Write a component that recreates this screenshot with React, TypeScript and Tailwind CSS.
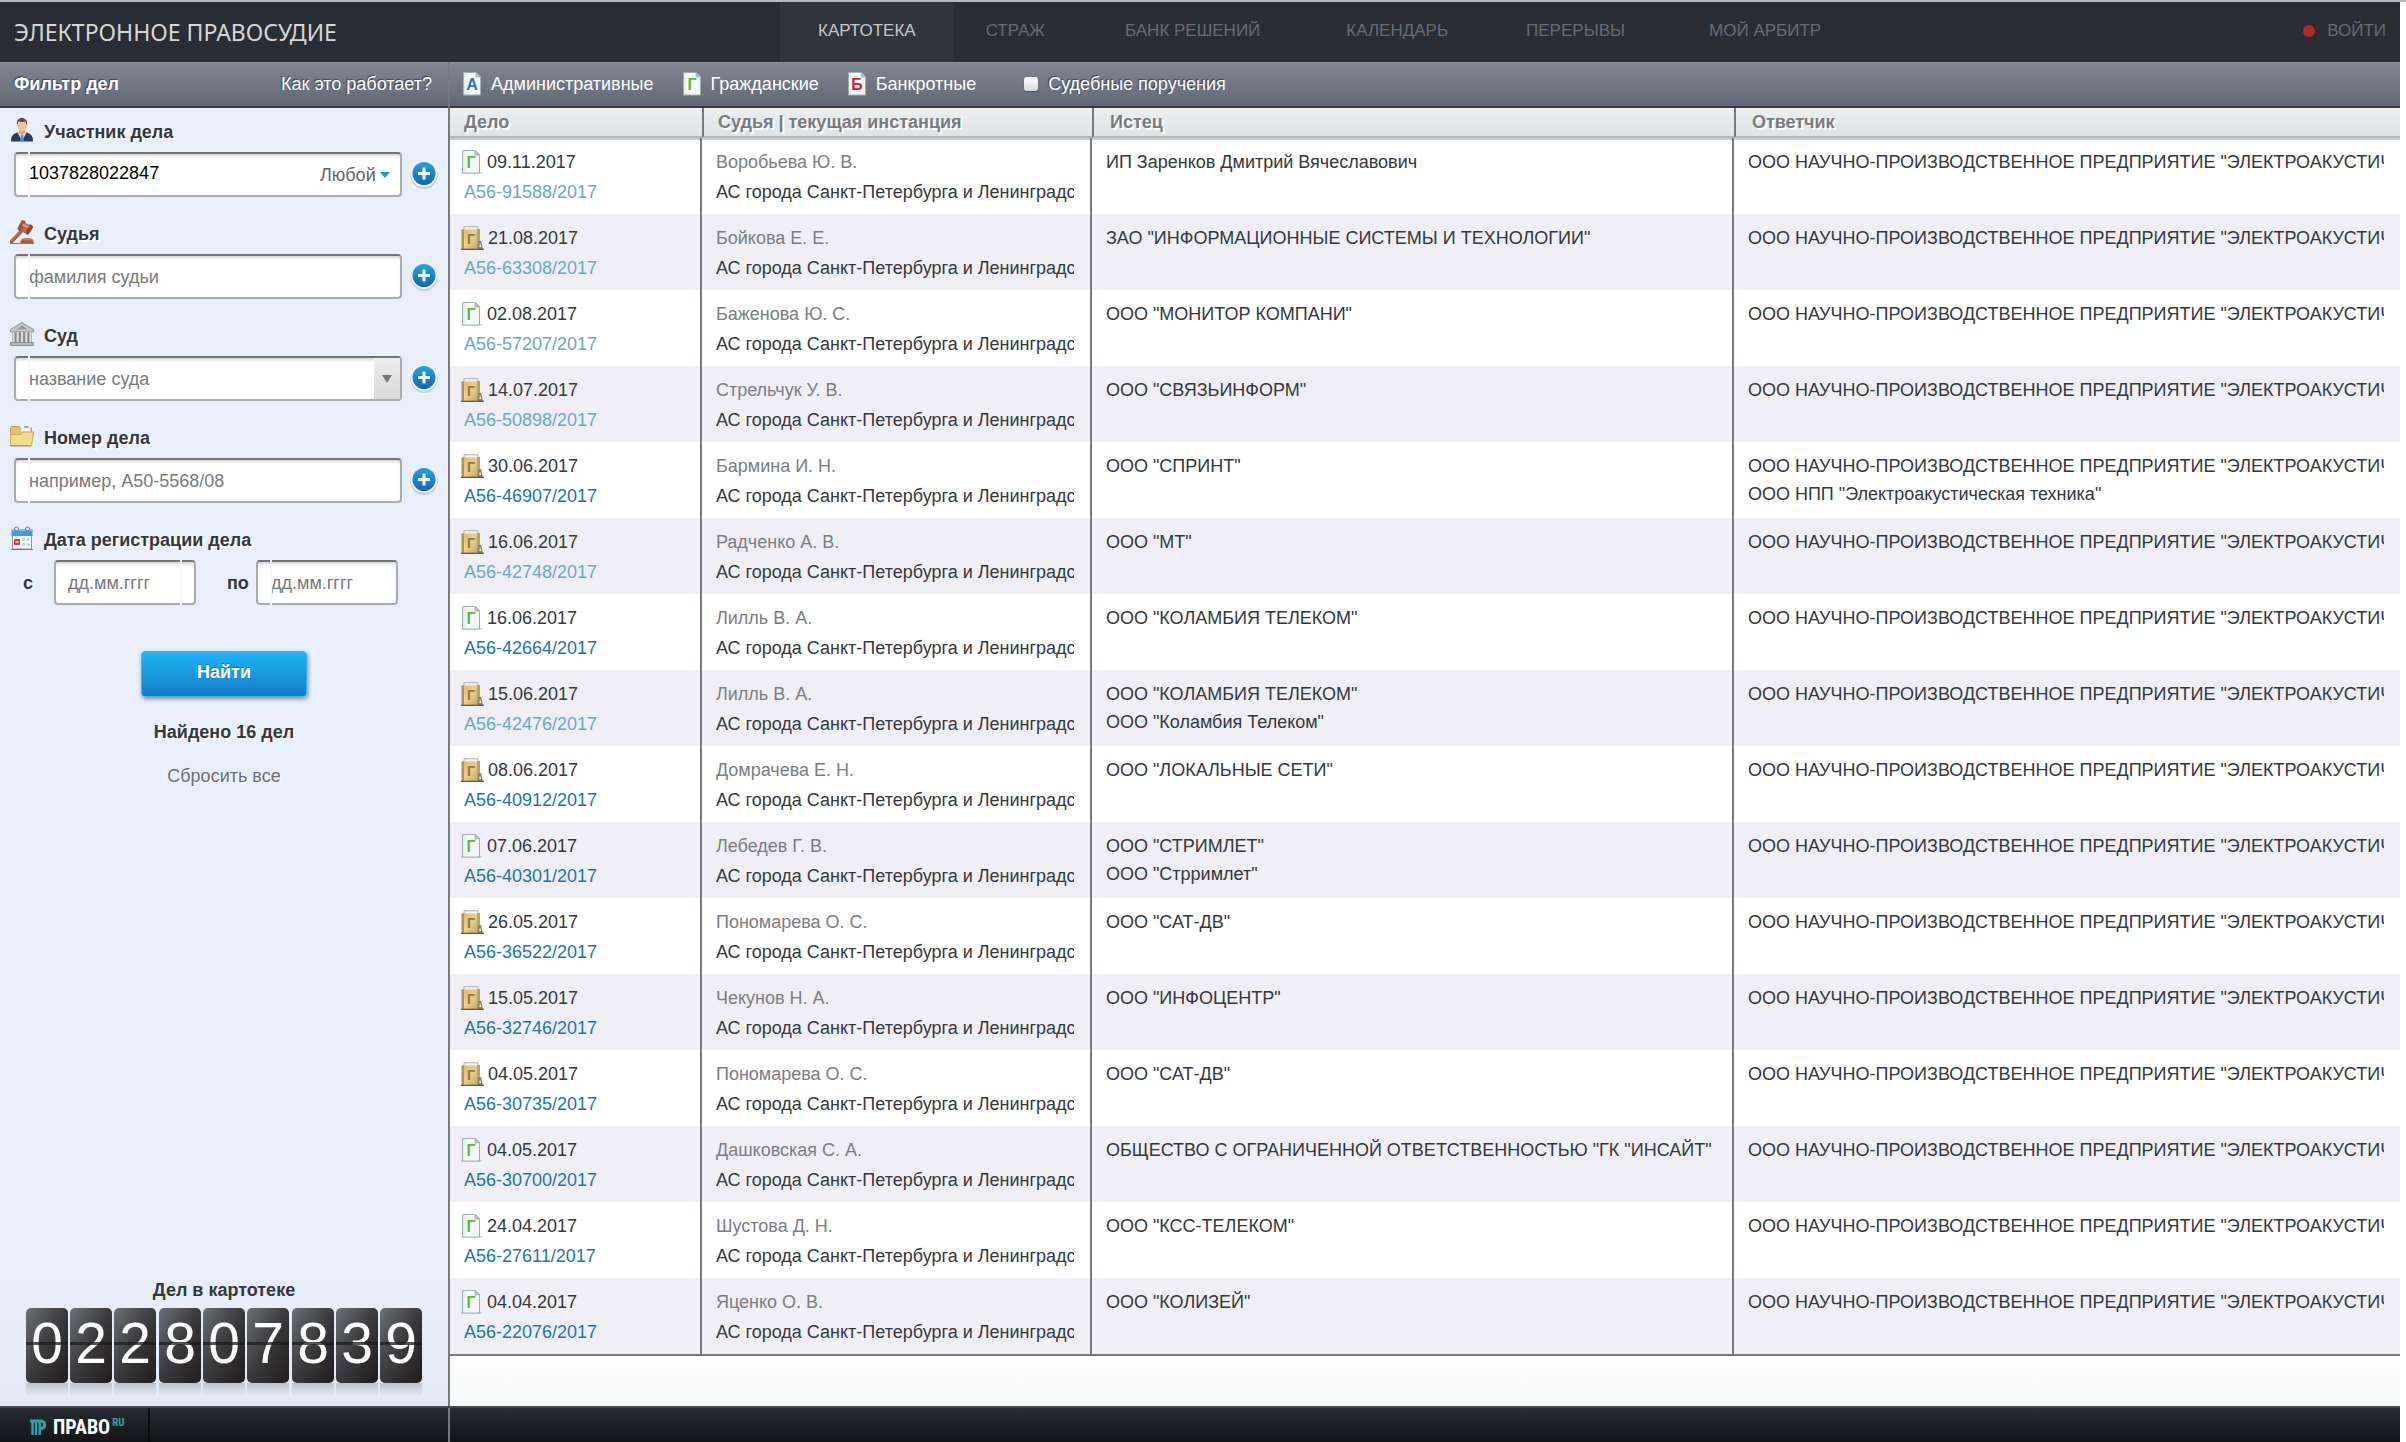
import { useState } from 'react'
import type { ReactNode } from 'react'
import clsx from 'clsx'

type CaseRow = {
  kind: 'doc' | 'folder'
  date: string
  number: string
  seen?: boolean
  judge: string
  plaintiffs: string[]
  respondents?: string[]
}

const COURT = 'АС города Санкт-Петербурга и Ленинградской области'
const RESPONDENT = 'ООО НАУЧНО-ПРОИЗВОДСТВЕННОЕ ПРЕДПРИЯТИЕ "ЭЛЕКТРОАКУСТИЧЕСКАЯ ТЕХНИКА"'

const cases: CaseRow[] = [
  { kind: 'doc', date: '09.11.2017', number: 'А56-91588/2017', seen: true, judge: 'Воробьева Ю. В.', plaintiffs: ['ИП Заренков Дмитрий Вячеславович'] },
  { kind: 'folder', date: '21.08.2017', number: 'А56-63308/2017', seen: true, judge: 'Бойкова Е. Е.', plaintiffs: ['ЗАО "ИНФОРМАЦИОННЫЕ СИСТЕМЫ И ТЕХНОЛОГИИ"'] },
  { kind: 'doc', date: '02.08.2017', number: 'А56-57207/2017', seen: true, judge: 'Баженова Ю. С.', plaintiffs: ['ООО "МОНИТОР КОМПАНИ"'] },
  { kind: 'folder', date: '14.07.2017', number: 'А56-50898/2017', seen: true, judge: 'Стрельчук У. В.', plaintiffs: ['ООО "СВЯЗЬИНФОРМ"'] },
  { kind: 'folder', date: '30.06.2017', number: 'А56-46907/2017', judge: 'Бармина И. Н.', plaintiffs: ['ООО "СПРИНТ"'], respondents: ['ООО НПП "Электроакустическая техника"'] },
  { kind: 'folder', date: '16.06.2017', number: 'А56-42748/2017', seen: true, judge: 'Радченко А. В.', plaintiffs: ['ООО "МТ"'] },
  { kind: 'doc', date: '16.06.2017', number: 'А56-42664/2017', judge: 'Лилль В. А.', plaintiffs: ['ООО "КОЛАМБИЯ ТЕЛЕКОМ"'] },
  { kind: 'folder', date: '15.06.2017', number: 'А56-42476/2017', seen: true, judge: 'Лилль В. А.', plaintiffs: ['ООО "КОЛАМБИЯ ТЕЛЕКОМ"', 'ООО "Коламбия Телеком"'] },
  { kind: 'folder', date: '08.06.2017', number: 'А56-40912/2017', judge: 'Домрачева Е. Н.', plaintiffs: ['ООО "ЛОКАЛЬНЫЕ СЕТИ"'] },
  { kind: 'doc', date: '07.06.2017', number: 'А56-40301/2017', judge: 'Лебедев Г. В.', plaintiffs: ['ООО "СТРИМЛЕТ"', 'ООО "Стрримлет"'] },
  { kind: 'folder', date: '26.05.2017', number: 'А56-36522/2017', judge: 'Пономарева О. С.', plaintiffs: ['ООО "САТ-ДВ"'] },
  { kind: 'folder', date: '15.05.2017', number: 'А56-32746/2017', judge: 'Чекунов Н. А.', plaintiffs: ['ООО "ИНФОЦЕНТР"'] },
  { kind: 'folder', date: '04.05.2017', number: 'А56-30735/2017', judge: 'Пономарева О. С.', plaintiffs: ['ООО "САТ-ДВ"'] },
  { kind: 'doc', date: '04.05.2017', number: 'А56-30700/2017', judge: 'Дашковская С. А.', plaintiffs: ['ОБЩЕСТВО С ОГРАНИЧЕННОЙ ОТВЕТСТВЕННОСТЬЮ "ГК "ИНСАЙТ"'] },
  { kind: 'doc', date: '24.04.2017', number: 'А56-27611/2017', judge: 'Шустова Д. Н.', plaintiffs: ['ООО "КСС-ТЕЛЕКОМ"'] },
  { kind: 'doc', date: '04.04.2017', number: 'А56-22076/2017', judge: 'Яценко О. В.', plaintiffs: ['ООО "КОЛИЗЕЙ"'] },
]

const nav = [
  { label: 'КАРТОТЕКА', className: 'px-[38px] bg-[#32343e] text-[#c6c8cb]' },
  { label: 'СТРАЖ', className: 'px-8 text-[#666b76]' },
  { label: 'БАНК РЕШЕНИЙ', className: 'px-12 text-[#666b76]' },
  { label: 'КАЛЕНДАРЬ', className: 'px-[38px] text-[#666b76]' },
  { label: 'ПЕРЕРЫВЫ', className: 'px-10 text-[#666b76]' },
  { label: 'МОЙ АРБИТР', className: 'px-11 text-[#666b76]' },
]

const counter = ['022', '807', '839']

const barClass =
  'h-[46px] shrink-0 flex items-center pb-[2px] border-t border-t-[#8f93a0] border-b-2 border-b-[#363b47] bg-gradient-to-b from-[#808591] to-[#616875] text-white text-shadow-[-1px_-1px_1px_#3c4252]'

const boxClass =
  'relative flex items-center h-[45px] rounded-[4px] border-2 border-[#a9abad] border-t-[#717478] bg-white shadow-[inset_0_3px_3px_-1px_#d4d6d8] before:absolute before:left-3 before:-inset-y-[2px] before:w-[2px] before:bg-[#f4f8fd]'

/* ---------- icons ---------- */

function DocIcon({ letter = 'Г', color = '#5fb32e' }: { letter?: string; color?: string }) {
  return (
    <svg width="22" height="24" viewBox="0 0 22 24" className="shrink-0" aria-hidden="true">
      <defs>
        <linearGradient id="sheet" x1="0" y1="0" x2="1" y2="0">
          <stop offset="0" stopColor="#e3ecea" />
          <stop offset="0.4" stopColor="#fdfefe" />
          <stop offset="1" stopColor="#f1f6f5" />
        </linearGradient>
      </defs>
      <path d="M0 22.5h21v1H0z" fill="#7d8487" fillOpacity=".6" />
      <path d="M1.5 .5h13l4 4V23h-17z" fill="url(#sheet)" stroke="#9fb0b1" />
      <path d="M14 .5V5h4.5z" fill="#b4c4c4" stroke="#9fb0b1" strokeWidth=".7" />
      <text x="10" y="18" textAnchor="middle" fontSize="16" fontWeight="bold" fill={color} className="text-shadow-none">
        {letter}
      </text>
    </svg>
  )
}

function FolderCaseIcon() {
  return (
    <svg width="23" height="24" viewBox="0 0 23 24" className="shrink-0" aria-hidden="true">
      <defs>
        <linearGradient id="cover" x1="0" y1="0" x2="1" y2="1">
          <stop offset="0" stopColor="#d3b872" />
          <stop offset="0.5" stopColor="#ebd08a" />
          <stop offset="1" stopColor="#c7aa66" />
        </linearGradient>
      </defs>
      <path d="M3 4V.7h14V20" fill="#eef2f4" stroke="#aab3b6" />
      <path d="M16 3h3v19h-3z" fill="#b5a56e" />
      <path d="M1 3.5h15V23H1z" fill="url(#cover)" />
      <path d="M.5 3.5H3V23H.5z" fill="#a79361" />
      <path d="M16 23l1.500-8h2.500l2 8z" fill="#8b8161" />
      <path d="M18 21l1-4 1.500 4z" fill="#e3dcc0" />
      <path d="M0 22.7h23V24H0z" fill="#5f5a4c" />
      <text x="10" y="18" textAnchor="middle" fontSize="14" fontWeight="bold" fill="#9c7438">
        Г
      </text>
    </svg>
  )
}

function PersonIcon() {
  return (
    <svg width="24" height="24" viewBox="0 0 24 24" aria-hidden="true">
      <path d="M1 23c0-5 2-7 6.500-8.500h9C21 16 23 18 23 23z" fill="#303a5e" />
      <path d="M7.500 14.500L12 23l4.500-8.500z" fill="#dbe8f7" />
      <path d="M11 16.500h2l1 6.500h-4z" fill="#4a8fd0" />
      <path d="M9 11h6v4l-3 2-3-2z" fill="#d9a97c" />
      <ellipse cx="12" cy="7.500" rx="4.500" ry="5.700" fill="#eec39a" />
      <path d="M7 7.500C6 2 9 0 12 0s6 2 5 7.500c-.8-2-.8-3-1.700-4-2 .6-4.600.6-6.600 0-.9 1-.9 2-1.700 4z" fill="#5a4a42" />
      <path d="M1 23.500h22" stroke="#8d94a8" />
    </svg>
  )
}

function GavelIcon() {
  return (
    <svg width="24" height="24" viewBox="0 0 24 24" aria-hidden="true">
      <path d="M1.500 21.500L12 10.500" stroke="#a1583b" strokeWidth="3.500" strokeLinecap="round" />
      <path d="M1.500 20.500L11 10.500" stroke="#c88462" strokeWidth="1" strokeLinecap="round" />
      <path d="M12 1.500l10 4.500-4.500 8.500L8 9.500z" fill="#b36a4a" />
      <path d="M11.500 .5c2-.8 4 .3 4 1.500L11 11c-1.500 .5-3.500-.8-3.500-2.500z" fill="#9b5235" />
      <path d="M19.500 4.500c2 0 4 1.500 3.500 3l-4.500 7c-1.500.5-3-.7-3-2z" fill="#8c4529" />
      <path d="M13 3.500l6 2.700-1 2-6-2.700z" fill="#d69a77" />
      <ellipse cx="17" cy="20" rx="6" ry="2" fill="#c27a57" />
      <path d="M10.500 20.500h13V23h-13z" fill="#a1583b" />
      <path d="M0 23.500h24" stroke="#8f7466" />
    </svg>
  )
}

function CourtIcon() {
  return (
    <svg width="24" height="24" viewBox="0 0 24 24" aria-hidden="true">
      <path d="M12 .7L23.500 7.500V10H.5V7.500z" fill="#c6c8ca" stroke="#8e9194" />
      <path d="M12 3.500l6 4H6z" fill="#9a9da0" />
      <path d="M2 10h20v10H2z" fill="#85888b" />
      <path d="M3.500 10v10M7.700 10v10M12 10v10M16.300 10v10M20.500 10v10" stroke="#dcdddf" strokeWidth="2.200" />
      <path d="M.5 20.500h23v3H.5z" fill="#b8babc" stroke="#8e9194" />
    </svg>
  )
}

function FolderIcon() {
  return (
    <svg width="24" height="24" viewBox="0 0 24 24" aria-hidden="true">
      <path d="M.5 21V4l1-1.500H9L10.500 4h11v8z" fill="#e3c074" stroke="#c39e54" />
      <path d="M11 2h8.500l1 5.500H11z" fill="#eef5f7" />
      <path d="M14.500 2h4v2h-4z" fill="#54b7c4" />
      <path d="M.5 21.500V12l1-1.500H11l2-2.500h10.700L21.500 21.500z" fill="#f5d98f" stroke="#cba85c" />
      <path d="M.5 22h21" stroke="#a98a4c" />
    </svg>
  )
}

function CalendarIcon() {
  return (
    <svg width="24" height="24" viewBox="0 0 24 24" aria-hidden="true">
      <path d="M2.500 9h19v14h-19z" fill="#f6f9fb" stroke="#8d99a3" />
      <path d="M1.500 3h21v7h-21z" fill="#3d9cdf" />
      <path d="M2 3h20v2H2z" fill="#7cc3f0" />
      <circle cx="6.500" cy="3" r="2" fill="#e8eef2" stroke="#5d7382" />
      <circle cx="17.500" cy="3" r="2" fill="#e8eef2" stroke="#5d7382" />
      <path d="M12 12h3v3h-3zM16.500 12h3v3h-3zM12 17h3v3h-3zM16.500 17h3v3h-3z" fill="#ccd6dc" />
      <path d="M4 13h6v6H4z" fill="#dd3d39" />
      <path d="M5.500 15h3v2h-3z" fill="#f7b0a8" />
      <path d="M1 23.500h22" stroke="#6d7b85" />
    </svg>
  )
}

function PlusButton({ label }: { label: string }) {
  return (
    <button type="button" aria-label={label} className="shrink-0 cursor-pointer">
      <svg width="28" height="28" viewBox="0 0 28 28" aria-hidden="true">
        <defs>
          <linearGradient id="plus" x1="0" y1="0" x2="0" y2="1">
            <stop offset="0" stopColor="#28a4de" />
            <stop offset="1" stopColor="#1167b0" />
          </linearGradient>
        </defs>
        <circle cx="14" cy="14.500" r="13.500" fill="#c4cdd8" />
        <circle cx="14" cy="13" r="13" fill="#f4f8fc" />
        <circle cx="14" cy="12.500" r="11.500" fill="url(#plus)" />
        <path d="M14 6.500v12M8 12.500h12" stroke="#e9f5fc" strokeWidth="3" />
      </svg>
    </button>
  )
}

/* ---------- sidebar ---------- */

function Field({ id, label, icon, children }: { id: string; label: string; icon: ReactNode; children: ReactNode }) {
  return (
    <div className="mb-[23px]">
      <div className="flex items-center gap-[10px] h-6 pl-[10px] mb-[10px]">
        {icon}
        <label htmlFor={id} className="font-bold leading-6 pt-1 text-shadow-[2px_2px_0_#fff]">
          {label}
        </label>
      </div>
      {children}
    </div>
  )
}

function Sidebar() {
  const [party, setParty] = useState('1037828022847')

  return (
    <aside className="w-[450px] shrink-0 flex flex-col border-r-2 border-[#757982] bg-[#e8effa]">
      <div className={clsx(barClass, 'justify-between pl-[14px] pr-4')}>
        <h2 className="font-bold">Фильтр дел</h2>
        <a href="#help">Как это работает?</a>
      </div>

      <form className="flex flex-col pt-[10px]" onSubmit={(e) => e.preventDefault()}>
        <Field id="party" label="Участник дела" icon={<PersonIcon />}>
          <div className="flex items-center gap-2 pl-[14px] pr-[10px]">
            <div className={clsx(boxClass, 'flex-1')}>
              <input
                id="party"
                value={party}
                onChange={(e) => setParty(e.target.value)}
                className="flex-1 min-w-0 pl-[13px] pb-1 text-black outline-none"
              />
              <select aria-label="Роль участника" className="appearance-none text-[#62666c] outline-none">
                <option>Любой</option>
              </select>
              <svg width="10" height="6" viewBox="0 0 10 6" className="ml-1 mr-[10px]" aria-hidden="true">
                <path d="M0 0h10L5 6z" fill="#2b93c9" />
              </svg>
            </div>
            <PlusButton label="Добавить участника" />
          </div>
        </Field>

        <Field id="judge" label="Судья" icon={<GavelIcon />}>
          <div className="flex items-center gap-2 pl-[14px] pr-[10px]">
            <div className={clsx(boxClass, 'flex-1')}>
              <input id="judge" placeholder="фамилия судьи" className="flex-1 min-w-0 pl-[13px] placeholder:text-[#77797c] outline-none" />
            </div>
            <PlusButton label="Добавить судью" />
          </div>
        </Field>

        <Field id="court" label="Суд" icon={<CourtIcon />}>
          <div className="flex items-center gap-2 pl-[14px] pr-[10px]">
            <div className={clsx(boxClass, 'flex-1')}>
              <input id="court" placeholder="название суда" className="flex-1 min-w-0 pl-[13px] placeholder:text-[#77797c] outline-none" />
              <button type="button" aria-label="Список судов" className="w-[26px] self-stretch flex items-center justify-center bg-gradient-to-b from-[#ececec] to-[#dadada]">
                <svg width="10" height="8" viewBox="0 0 10 8" aria-hidden="true">
                  <path d="M0 0h10L5 8z" fill="#757575" />
                </svg>
              </button>
            </div>
            <PlusButton label="Добавить суд" />
          </div>
        </Field>

        <Field id="number" label="Номер дела" icon={<FolderIcon />}>
          <div className="flex items-center gap-2 pl-[14px] pr-[10px]">
            <div className={clsx(boxClass, 'flex-1')}>
              <input id="number" placeholder="например, А50-5568/08" className="flex-1 min-w-0 pl-[13px] placeholder:text-[#77797c] outline-none" />
            </div>
            <PlusButton label="Добавить номер" />
          </div>
        </Field>

        <Field id="from" label="Дата регистрации дела" icon={<CalendarIcon />}>
          <div className="flex items-center pl-[23px] font-bold">
            <span className="w-[31px]">с</span>
            <div className={clsx(boxClass, 'w-[142px] font-normal before:left-[124px]')}>
              <input id="from" placeholder="дд.мм.гггг" className="w-full pl-3 placeholder:text-[#77797c] outline-none" />
            </div>
            <label htmlFor="to" className="w-[60px] pl-[31px]">по</label>
            <div className={clsx(boxClass, 'w-[142px] font-normal')}>
              <input id="to" placeholder="дд.мм.гггг" className="w-full pl-[13px] placeholder:text-[#77797c] outline-none" />
            </div>
          </div>
        </Field>

        <div className="flex flex-col items-center pt-[23px]">
          <button
            type="submit"
            className="w-[166px] h-[46px] pb-1 rounded-[4px] border border-[#3fb4e6] bg-gradient-to-b from-[#20b5f5] to-[#147cc6] text-white font-bold shadow-[1px_2px_4px_#7d8794] text-shadow-[0_-1px_1px_#1a72ad]"
          >
            Найти
          </button>
          <p className="mt-[21px] leading-7 font-bold text-shadow-[2px_2px_0_#fff]">Найдено 16 дел</p>
          <button type="reset" className="mt-4 leading-7 text-[#696d78] text-shadow-[1px_1px_0_#fff]">
            Сбросить все
          </button>
        </div>
      </form>

      <div className="mt-auto flex flex-col items-center pb-[9px] bg-gradient-to-b from-[#e8effa] to-[#e2e9f5]">
        <p className="leading-7 mb-1 font-bold">Дел в картотеке</p>
        <div className="flex gap-[3px]">
          {counter.map((group, g) => (
            <div key={g} className="flex gap-[2px]">
              {group.split('').map((digit, i) => (
                <div key={i}>
                  <div className="relative w-[42px] h-[75px] rounded-[5px] bg-gradient-to-br from-[#6d7276] via-[#3a3a3c] to-[#221c1d] text-white text-[57px] leading-[70px] text-center">
                    {digit}
                    <span className="absolute inset-x-0 top-[34px] h-[3px] bg-[#1c1b1c]/75" />
                  </div>
                  <div className="h-[14px] bg-gradient-to-b from-[#bfc3cf] to-[#e4ebf7]" />
                </div>
              ))}
            </div>
          ))}
        </div>
      </div>
    </aside>
  )
}

/* ---------- results ---------- */

function CaseTable() {
  const th =
    'h-[30px] border-b-2 border-b-[#b5b8b8] bg-gradient-to-b from-[#edeff0] to-[#dfe3e5] text-left font-bold text-[#787b80] leading-7 text-shadow-[2px_2px_0_#fff]'
  const td = 'h-[76px] pl-[14px] pr-4 align-top whitespace-nowrap overflow-hidden'

  return (
    <table className="w-full table-fixed border-separate border-spacing-0 border-b-2 border-[#757982]">
      <colgroup>
        <col className="w-[12.92%]" />
        <col className="w-[20%]" />
        <col className="w-[32.92%]" />
        <col />
      </colgroup>
      <thead>
        <tr>
          <th className={clsx(th, 'pl-[14px]')}>Дело</th>
          <th className={clsx(th, 'pl-[14px] border-l-2 border-l-[#757982]')}>Судья | текущая инстанция</th>
          <th className={clsx(th, 'pl-4 border-l-2 border-l-[#757982]')}>Истец</th>
          <th className={clsx(th, 'pl-4 border-l-2 border-l-[#757982]')}>Ответчик</th>
        </tr>
      </thead>
      <tbody>
        {cases.map((row) => (
          <tr key={row.number} className="bg-white even:bg-[#f0eff6] first:shadow-[inset_0_2px_0_#cacccc]">
            <td className={clsx(td, 'pt-[9px] border-r-2 border-[#757982] leading-[30px]')}>
              <div className="flex items-center gap-1 -ml-[3px]">
                {row.kind === 'doc' ? <DocIcon /> : <FolderCaseIcon />}
                {row.date}
              </div>
              <a href={'#' + row.number} className={row.seen ? 'text-[#69a7c6]' : 'text-[#1d74ae]'}>
                {row.number}
              </a>
            </td>
            <td className={clsx(td, 'pt-[9px] border-r-2 border-[#757982] leading-[30px]')}>
              <div className="text-[#7b7d82]">{row.judge}</div>
              <div className="overflow-hidden">{COURT}</div>
            </td>
            <td className={clsx(td, 'pt-[10px] border-r-2 border-[#757982] leading-7')}>
              {row.plaintiffs.map((name) => (
                <div key={name}>{name}</div>
              ))}
            </td>
            <td className={clsx(td, 'pt-[10px] leading-7')}>
              {[RESPONDENT, ...(row.respondents ?? [])].map((name) => (
                <div key={name} className="overflow-hidden">{name}</div>
              ))}
            </td>
          </tr>
        ))}
      </tbody>
    </table>
  )
}

function Results() {
  return (
    <main className="flex-1 min-w-0 flex flex-col bg-gradient-to-b from-white from-95% to-[#f7f8f8]">
      <div className={clsx(barClass, 'pl-3')}>
        <button type="button" className="flex items-center gap-[7px] mr-7">
          <DocIcon letter="А" color="#1f78c4" />
          Административные
        </button>
        <button type="button" className="flex items-center gap-[7px] mr-7">
          <DocIcon />
          Гражданские
        </button>
        <button type="button" className="flex items-center gap-[7px] mr-12">
          <DocIcon letter="Б" color="#cc2530" />
          Банкротные
        </button>
        <label className="flex items-center gap-[10px]">
          <input type="checkbox" className="appearance-none size-[14px] rounded-[3px] bg-gradient-to-b from-white to-[#d8d8d8] shadow-[0_1px_1px_#4a4f5a]" />
          Судебные поручения
        </label>
      </div>
      <CaseTable />
    </main>
  )
}

export default function App() {
  return (
    <div className="min-h-screen flex flex-col pr-[6px] bg-white border-t-2 border-[#b4b9bc] font-['Liberation_Sans',Arial,sans-serif] text-[18px] leading-6 text-[#34373c]">
      <header className="h-[60px] flex items-stretch bg-[#2a2d36]">
        <div className="w-[32.5%] flex items-center pl-[14px]">
          <h1 className="font-['Noto_Sans','Open_Sans',sans-serif] text-[23px] text-[#d6d7d9]">ЭЛЕКТРОННОЕ ПРАВОСУДИЕ</h1>
        </div>
        <nav className="flex items-stretch text-[17px]">
          {nav.map((item) => (
            <a key={item.label} href="#" className={clsx('flex items-center pb-[2px]', item.className)}>
              {item.label}
            </a>
          ))}
        </nav>
        <a href="#login" className="ml-auto flex items-center gap-3 pr-[14px] pb-[2px] text-[17px] text-[#666b76]">
          <span className="size-3 rounded-full bg-[#b52a23]" />
          ВОЙТИ
        </a>
      </header>

      <div className="flex-1 flex items-stretch">
        <Sidebar />
        <Results />
      </div>

      <footer className="h-9 flex items-stretch border-t-2 border-[#474b50] bg-gradient-to-b from-[#2a2c31] to-[#131417]">
        <div className="w-[450px] shrink-0 flex items-stretch border-r-2 border-[#757982]">
          <a href="#pravo" className="w-[150px] flex items-center gap-[7px] pl-[30px] pt-1 border-r-2 border-[#0b0c0e]">
            <svg width="16" height="17" viewBox="0 0 16 17" aria-hidden="true">
              <path d="M0 2h11a3.500 3.500 0 010 7.500h-1" fill="none" stroke="#2ba5a8" strokeWidth="3" />
              <path d="M2.500 3v13M6 3v13M9.700 3v13" fill="none" stroke="#2ba5a8" strokeWidth="2.400" />
            </svg>
            <span className="flex items-start font-['Roboto_Condensed','Open_Sans_Condensed',Roboto,sans-serif] font-bold text-[20px] leading-6 text-white">
              ПРАВО
              <sup className="ml-[2px] top-0 text-[11px] leading-4 text-[#2ba5a8]">RU</sup>
            </span>
          </a>
        </div>
      </footer>
    </div>
  )
}
